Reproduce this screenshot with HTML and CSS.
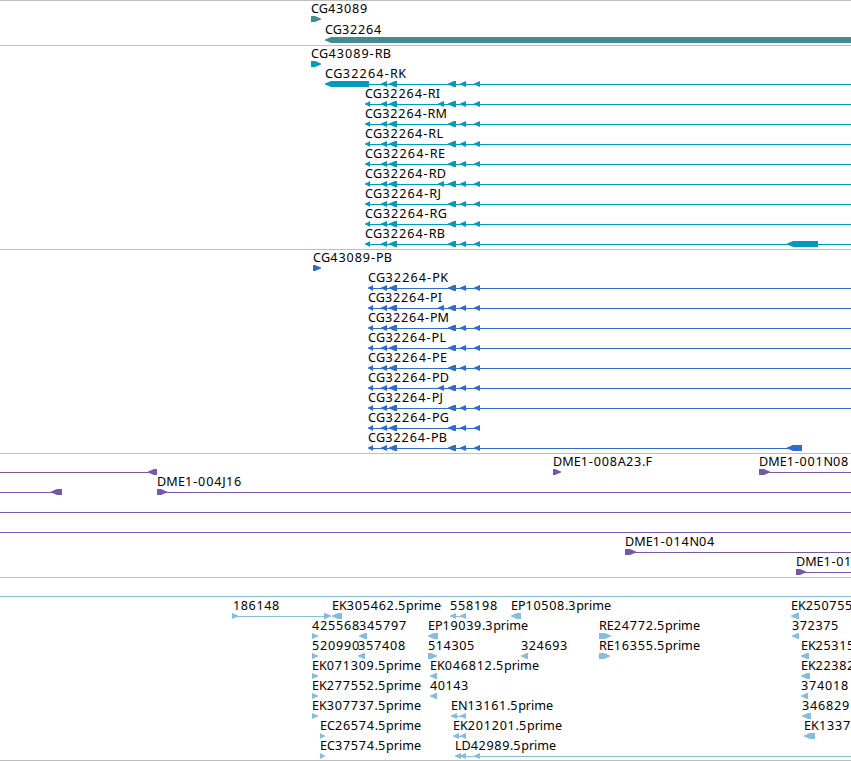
FILE: index.html
```html
<!DOCTYPE html>
<html lang="en">
<head>
<meta charset="utf-8">
<title>Genome tracks</title>
<link rel="stylesheet" href="styles.css">
</head>
<body>
<main class="browser">
<svg class="track gene" height="44"></svg>
<svg class="track transcript" height="203"></svg>
<svg class="track protein" height="203"></svg>
<svg class="track clone" height="123"></svg>
<svg class="track est" height="182"></svg>
</main>
<script src="tracks.js"></script>
</body>
</html>
```
FILE: styles.css
```css
body {
  margin: 0;
  background: #fff;
  overflow: hidden;
}
.browser {
  display: flex;
  flex-direction: column;
  width: 851px;
  border-top: 1px solid #bebebe;
}
.track {
  display: block;
  box-sizing: content-box;
  flex: none;
  width: 851px;
  border-bottom: 1px solid #bebebe;
  overflow: hidden;
}
.track text {
  font: 12.6px "Noto Sans", "DejaVu Sans", sans-serif;
  fill: #000;
}
.track .digits { letter-spacing: 0.75px; }
.track rect { shape-rendering: crispEdges; }
.gene { fill: #408c92; }
.transcript { fill: #009bbe; }
.protein { fill: #2f6bcb; }
.clone { fill: #7558a8; }
.est { fill: #87bcdd; }
```
FILE: tracks.js
```js
const EDGE = 851;
const NS = "http://www.w3.org/2000/svg";

// Each track: top offset on the sheet and rows of [axis y, labels, lines, left glyphs, right glyphs].
// Labels are [text, start, end]; lines and glyphs are [start, end].
const exons = [[381, 387], [389, 397], [448, 456], [460, 466], [474, 480]];
const extra = [438, 444];

const transcripts = [
  [64, [["CG43089-RB", 311, 391]], [], [], [[311, 321]]],
  [84, [["CG32264-RK", 325, 406]], [[369, EDGE]], [[325, 369], ...exons], []],
];
[["RI", 440], ["RM", 447], ["RL", 443], ["RE", 445], ["RD", 446], ["RJ", 441], ["RG", 447], ["RB", 445]].forEach(([n, end], i) => {
  const left = [[365, 370], ...exons];
  if (n === "RI" || n === "RD") left.push(extra);
  if (n === "RB") left.push([787, 818]);
  transcripts.push([104 + 20 * i, [["CG32264-" + n, 365, end]], [[367, EDGE]], left, []]);
});

const proteins = [[268, [["CG43089-PB", 313, 392]], [], [], [[313, 321]]]];
[["PK", 448], ["PI", 442], ["PM", 449], ["PL", 446], ["PE", 447], ["PD", 449], ["PJ", 443], ["PG", 449], ["PB", 447]].forEach(([n, end], i) => {
  const left = [[368, 373], ...exons];
  if (n === "PI" || n === "PD") left.push(extra);
  if (n === "PB") left.push([787, 802]);
  const stop = n === "PG" ? 478 : n === "PB" ? 800 : EDGE;
  proteins.push([288 + 20 * i, [["CG32264-" + n, 368, end]], [[370, stop]], left, []]);
});

const tracks = {
  gene: [1, [
    [19, [["CG43089", 311, 368]], [], [], [[311, 321]]],
    [40, [["CG32264", 325, 382]], [], [[325, EDGE + 5]], []],
  ]],
  transcript: [46, transcripts],
  protein: [250, proteins],
  clone: [454, [
    [472, [["DME1-008A23.F", 553, 652], ["DME1-001N08", 759, 849]], [[0, 150], [768, EDGE]], [[148, 157]], [[553, 561], [759, 770]]],
    [492, [["DME1-004J16", 157, 242]], [[0, 53], [165, EDGE]], [[51, 62]], [[157, 167]]],
    [512, [], [[0, EDGE]], [], []],
    [532, [], [[0, EDGE]], [], []],
    [552, [["DME1-014N04", 625, 715]], [[634, EDGE]], [], [[625, 636]]],
    [572, [["DME1-01", 796, 852]], [[804, EDGE]], [], [[796, 806]]],
  ]],
  est: [578, [
    [596, [], [[0, EDGE]], [], []],
    [616, [["186148", 233, 280], ["EK305462.5prime", 332, 441], ["558198", 450, 498], ["EP10508.3prime", 511, 611], ["EK250755", 791, 853]],
      [[236, 330], [453, 462]], [[332, 342], [450, 456], [460, 466], [511, 521], [791, 799]], [[232, 238], [324, 331]]],
    [636, [["425568", 312, 360], ["345797", 359, 407], ["EP19039.3prime", 428, 528], ["RE24772.5prime", 599, 700], ["372375", 792, 839]],
      [], [[359, 367], [428, 438], [792, 799]], [[312, 318], [599, 611]]],
    [656, [["520990", 312, 360], ["357408", 358, 406], ["514305", 428, 475], ["324693", 521, 568], ["RE16355.5prime", 599, 700], ["EK25315", 801, 855]],
      [], [[358, 365], [521, 528], [801, 809]], [[312, 318], [428, 437], [599, 610]]],
    [676, [["EK071309.5prime", 312, 421], ["EK046812.5prime", 430, 539], ["EK22382", 801, 855]], [], [[430, 437], [801, 810]], [[312, 318]]],
    [696, [["EK277552.5prime", 312, 421], ["40143", 430, 469], ["374018", 801, 849]], [], [[430, 437], [801, 808]], [[312, 318]]],
    [716, [["EK307737.5prime", 312, 421], ["EN13161.5prime", 451, 553], ["346829", 802, 850]], [[454, 462]], [[451, 457], [460, 466], [802, 811]], [[312, 318]]],
    [736, [["EC26574.5prime", 320, 421], ["EK201201.5prime", 453, 562], ["EK1337", 804, 851]], [[456, 462]], [[453, 459], [460, 466], [804, 815]], [[320, 325]]],
    [756, [["EC37574.5prime", 320, 421], ["LD42989.5prime", 455, 556]], [[458, EDGE]], [[455, 461], [460, 466], [474, 480]], [[320, 325]]],
  ]],
};

function add(parent, tag, attrs, content) {
  const el = document.createElementNS(NS, tag);
  for (const key in attrs) el.setAttribute(key, attrs[key]);
  if (content) el.textContent = content;
  parent.appendChild(el);
  return el;
}

// Pointed block; dir is +1 when the tip is on the right.
function glyph(svg, a, b, y, dir) {
  const tip = dir > 0 ? b : a;
  const base = dir > 0 ? a : b;
  const neck = tip - dir * Math.min(6, b - a);
  const mid = tip - dir * 2.5;
  add(svg, "path", {
    d: `M${base},${y - 3}H${neck}L${mid},${y - 1.4}L${tip},${y - 0.6}V${y + 0.6}L${mid},${y + 1.6}L${neck},${y + 3}H${base}Z`,
  });
}

// Digits run a little wider than the letters around them.
function label(svg, text, a, b, y) {
  const el = add(svg, "text", { x: a, y });
  for (const part of text.split(/([\d-]+)/)) {
    if (part) add(el, "tspan", /\d/.test(part) ? { class: "digits" } : {}, part);
  }
  el.setAttribute("textLength", b - a);
}

for (const name in tracks) {
  const svg = document.querySelector("." + name);
  const [top, rows] = tracks[name];
  for (const [axis, labels, lines, left, right] of rows) {
    const y = axis - top;
    for (const [a, b] of lines) add(svg, "rect", { x: a, y, width: b - a, height: 1 });
    for (const [a, b] of left) glyph(svg, a, b, y, -1);
    for (const [a, b] of right) glyph(svg, a, b, y, 1);
    for (const [text, a, b] of labels) label(svg, text, a, b, y - 6);
  }
}
```
